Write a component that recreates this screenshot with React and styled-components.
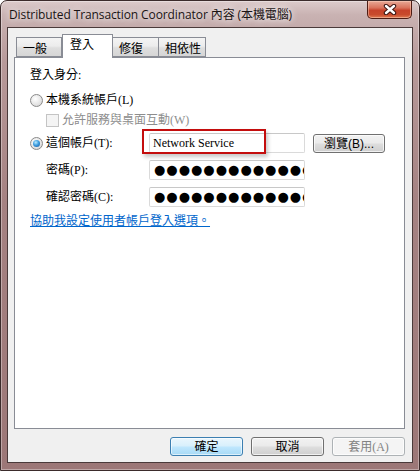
import React from "react";
import styled, { createGlobalStyle } from "styled-components";

const GlobalStyle = createGlobalStyle`
  html, body {
    margin: 0;
    padding: 0;
    background: #ffffff;
  }
  body {
    font-family: "Liberation Serif", "Noto Sans CJK TC", serif;
    font-size: 12px;
    color: #000;
  }
`;

const Window = styled.div`
  box-sizing: border-box;
  width: 420px;
  height: 471px;
  display: flex;
  flex-direction: column;
  padding: 0 6px 7px 6px;
  border: 1px solid #3b2b2b;
  border-radius: 7px 7px 0 0;
  background: linear-gradient(
    180deg,
    #dccbcb 0px,
    #c9b2b2 14px,
    #b89a9a 60px,
    #a58282 200px,
    #9c7777 100%
  );
  box-shadow: inset 0 0 0 1px rgba(255, 255, 255, 0.35);
`;

const TitleBar = styled.div`
  height: 26px;
  display: flex;
  align-items: flex-start;
  justify-content: space-between;
  flex-shrink: 0;
`;

const TitleText = styled.div`
  font-family: "Open Sans", "Noto Sans CJK TC", sans-serif;
  font-size: 12px;
  line-height: 16px;
  margin-top: 6px;
  padding-left: 2px;
  color: #1a1414;
  white-space: nowrap;
  letter-spacing: -0.1px;
  text-shadow: 0 0 6px rgba(255, 255, 255, 0.9), 0 0 10px rgba(255, 255, 255, 0.6);
`;

const CloseButton = styled.div`
  box-sizing: border-box;
  width: 45px;
  height: 18px;
  margin-right: 1px;
  display: flex;
  align-items: center;
  justify-content: center;
  border: 1px solid #4e1c14;
  border-top: none;
  border-radius: 0 0 5px 5px;
  background: linear-gradient(
    180deg,
    #e9a996 0%,
    #d9735c 40%,
    #c7422a 55%,
    #c84a2c 80%,
    #e07a52 100%
  );
  box-shadow: inset 0 0 0 1px rgba(255, 220, 200, 0.45);
`;

const Client = styled.div`
  flex: 1;
  display: flex;
  flex-direction: column;
  background: #f0f0f0;
  border: 1px solid #4a3a3a;
  padding: 6px 7px 6px 6px;
  min-height: 0;
`;

const TabRow = styled.div`
  height: 23px;
  display: flex;
  align-items: flex-end;
  padding-left: 2px;
  position: relative;
  z-index: 1;
  flex-shrink: 0;
`;

const Tab = styled.div`
  box-sizing: border-box;
  width: ${(p) => p.$w}px;
  height: ${(p) => (p.$active ? 24 : 20)}px;
  margin-bottom: ${(p) => (p.$active ? -1 : 0)}px;
  padding: ${(p) => (p.$active ? "3px 0 0 7px" : "4px 0 0 6px")};
  line-height: 14px;
  font-size: 12px;
  border: 1px solid #898c95;
  border-bottom: ${(p) => (p.$active ? "none" : "1px solid #898c95")};
  border-left: ${(p) => (p.$first || p.$active ? "1px solid #898c95" : "none")};
  background: ${(p) =>
    p.$active
      ? "#ffffff"
      : "linear-gradient(180deg, #f4f4f4 0%, #ececec 45%, #dedede 55%, #d6d6d6 100%)"};
  white-space: nowrap;
`;

const Panel = styled.div`
  flex: 1;
  background: #ffffff;
  border: 1px solid #898c95;
  padding: 9px 15px;
  display: flex;
  flex-direction: column;
  align-items: flex-start;
`;

const Line = styled.div`
  height: 16px;
  line-height: 16px;
  display: flex;
  align-items: center;
  margin-top: ${(p) => p.$mt || 0}px;
  padding-left: ${(p) => p.$indent || 0}px;
  color: ${(p) => (p.$disabled ? "#8d8d8d" : "#000")};
  white-space: nowrap;
`;

const Radio = styled.span`
  box-sizing: border-box;
  width: 13px;
  height: 13px;
  margin-right: 3px;
  border-radius: 50%;
  border: 1px solid #8a8a8a;
  background: radial-gradient(circle at 40% 35%, #ffffff 0%, #e6e6e6 55%, #cfcfcf 100%);
  display: inline-flex;
  align-items: center;
  justify-content: center;
  flex-shrink: 0;

  &::after {
    content: "";
    display: ${(p) => (p.$checked ? "block" : "none")};
    width: 7px;
    height: 7px;
    border-radius: 50%;
    background: radial-gradient(circle at 40% 35%, #b9eaff 0%, #3e9ee0 45%, #12529a 100%);
  }
`;

const Check = styled.span`
  box-sizing: border-box;
  width: 13px;
  height: 13px;
  margin-right: 3px;
  border: 1px solid #c4c4c4;
  background: #f4f4f4;
  flex-shrink: 0;
`;

const AccountGrid = styled.div`
  margin-top: 5px;
  display: grid;
  grid-template-columns: 111px 156px 72px;
  grid-auto-rows: 20px;
  column-gap: 8px;
  row-gap: 7px;
  align-items: center;
`;

const FieldLabel = styled.div`
  display: flex;
  align-items: center;
  padding-left: ${(p) => (p.$indent ? 16 : 0)}px;
  white-space: nowrap;
  line-height: 16px;
`;

const Field = styled.div`
  box-sizing: border-box;
  height: 20px;
  position: relative;
  border: 1px solid #dadada;
  border-top-color: #c8c8c8;
  border-radius: 2px;
  background: #ffffff;
  padding-left: ${(p) => (p.$dots ? 4 : 3)}px;
  display: flex;
  align-items: center;
  overflow: ${(p) => (p.$dots ? "hidden" : "visible")};
  white-space: nowrap;
`;

const FieldText = styled.span`
  font-family: "Liberation Serif", serif;
  font-size: 12px;
  line-height: 16px;
`;

const Dots = styled.span`
  font-family: "DejaVu Sans", sans-serif;
  font-size: 13px;
  line-height: 16px;
  letter-spacing: 1px;
`;

const Highlight = styled.div`
  position: absolute;
  left: -8px;
  top: -5px;
  width: 124px;
  height: 25px;
  box-sizing: border-box;
  border: 2px solid #c40d0d;
  box-shadow: 2px 3px 4px rgba(0, 0, 0, 0.22);
  pointer-events: none;
`;

const Button = styled.div`
  box-sizing: border-box;
  width: ${(p) => p.$w || 73}px;
  height: 19px;
  display: flex;
  align-items: center;
  justify-content: center;
  border-radius: 3px;
  border: 1px solid ${(p) => (p.$default ? "#3c7fb1" : p.$disabled ? "#adb2b5" : "#707070")};
  background: ${(p) =>
    p.$disabled
      ? "#f4f4f4"
      : p.$default
      ? "linear-gradient(180deg, #eaf6fd 0%, #d9f0fc 45%, #bee6fd 55%, #a7d9f5 100%)"
      : "linear-gradient(180deg, #f2f2f2 0%, #ebebeb 45%, #dddddd 55%, #cfcfcf 100%)"};
  box-shadow: inset 0 0 0 1px
    ${(p) => (p.$default ? "rgba(255,255,255,0.6)" : "rgba(255,255,255,0.7)")};
  color: ${(p) => (p.$disabled ? "#838383" : "#000")};
  font-family: ${(p) =>
    p.$sans
      ? '"Liberation Sans", "Noto Sans CJK TC", sans-serif'
      : '"Liberation Serif", "Noto Sans CJK TC", serif'};
  font-size: 12px;
  line-height: 14px;
  white-space: nowrap;
  align-self: ${(p) => (p.$top ? "start" : "auto")};
  margin-top: ${(p) => (p.$top ? 1 : 0)}px;
`;

const Link = styled.a`
  margin-top: 6px;
  height: 16px;
  line-height: 16px;
  color: #0066cc;
  text-decoration: underline;
  white-space: nowrap;
  cursor: pointer;
`;

const Footer = styled.div`
  margin-top: 8px;
  display: flex;
  justify-content: flex-end;
  gap: 8px;
  flex-shrink: 0;
`;

const CloseGlyph = () => (
  <svg width="14" height="11" viewBox="0 0 14 11">
    <path d="M3 2 L11 9 M11 2 L3 9" stroke="#3a1410" strokeWidth="4.4" strokeLinecap="round" />
    <path d="M3 2 L11 9 M11 2 L3 9" stroke="#ffffff" strokeWidth="2.4" strokeLinecap="round" />
  </svg>
);

const tabs = [
  { label: "一般", w: 46 },
  { label: "登入", w: 51, active: true },
  { label: "修復", w: 46 },
  { label: "相依性", w: 47 },
];

const dots = "●●●●●●●●●●●●●●●●";

export default function App() {
  return (
    <>
      <GlobalStyle />
      <Window>
        <TitleBar>
          <TitleText>Distributed Transaction Coordinator 內容 (本機電腦)</TitleText>
          <CloseButton>
            <CloseGlyph />
          </CloseButton>
        </TitleBar>
        <Client>
          <TabRow>
            {tabs.map((t, i) => (
              <Tab key={t.label} $w={t.w} $active={t.active} $first={i === 0}>
                {t.label}
              </Tab>
            ))}
          </TabRow>
          <Panel>
            <Line>登入身分:</Line>
            <Line $mt={9}>
              <Radio />
              本機系統帳戶(L)
            </Line>
            <Line $mt={4} $indent={16} $disabled>
              <Check />
              允許服務與桌面互動(W)
            </Line>
            <AccountGrid>
              <FieldLabel>
                <Radio $checked />
                這個帳戶(T):
              </FieldLabel>
              <Field>
                <FieldText>Network Service</FieldText>
                <Highlight />
              </Field>
              <Button $w={72} $top $sans>
                瀏覽(B)...
              </Button>
              <FieldLabel $indent>密碼(P):</FieldLabel>
              <Field $dots>
                <Dots>{dots}</Dots>
              </Field>
              <span />
              <FieldLabel $indent>確認密碼(C):</FieldLabel>
              <Field $dots>
                <Dots>{dots}</Dots>
              </Field>
              <span />
            </AccountGrid>
            <Link>協助我設定使用者帳戶登入選項。</Link>
          </Panel>
          <Footer>
            <Button $default>確定</Button>
            <Button>取消</Button>
            <Button $disabled>套用(A)</Button>
          </Footer>
        </Client>
      </Window>
    </>
  );
}
